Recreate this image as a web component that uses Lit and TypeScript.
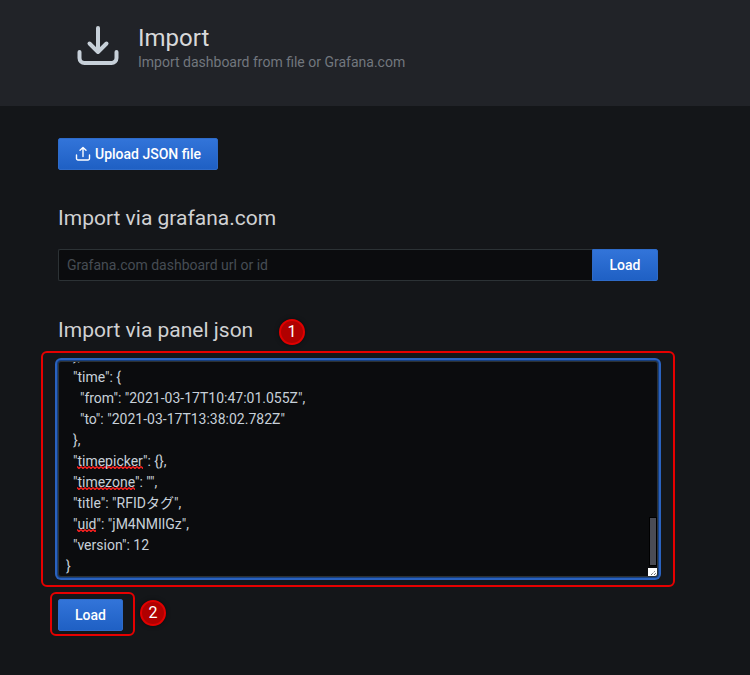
import { LitElement, html, css } from "lit";
import { customElement } from "lit/decorators.js";

@customElement("app-root")
export class AppRoot extends LitElement {
  static styles = css`
    :host { display: block; position: relative; width: 750px; height: 675px; overflow: hidden; background: #141619; font-family: Roboto, "Noto Sans CJK JP", sans-serif; color: #c7d0d9; font-size: 14px; }
    .header { height: 106px; box-sizing: border-box; background: #212328; display: flex; padding: 24px 0 0 76px; gap: 18px; }
    .header svg { width: 44px; height: 44px; flex: none; }
    .title { font-size: 24px; line-height: 28px; color: #d8d9da; font-weight: 400; }
    .sub { font-size: 14px; line-height: 16px; color: #72777e; margin-top: 2px; }
    .main { padding: 32px 0 0 58px; width: 600px; }
    .btn { height: 32px; box-sizing: border-box; border: 1px solid #2e6bc9; border-radius: 2px; background: linear-gradient(180deg, #3274d9, #1f60c4); color: #fff; font: 500 14px Roboto, sans-serif; display: flex; align-items: center; justify-content: center; padding: 0; }
    .upload { width: 160px; gap: 4px; padding-bottom: 1px; }
    .upload svg { width: 16px; height: 16px; }
    h2 { font-size: 21px; line-height: 24px; font-weight: 400; color: #d0d1d3; margin: 0; }
    .h1 { margin-top: 36px; }
    .row { display: flex; margin-top: 19px; }
    .input { flex: 1; height: 32px; box-sizing: border-box; background: #0b0c0e; border: 1px solid #2c3235; border-right: 0; border-radius: 2px 0 0 2px; color: #464c54; padding: 0 8px; line-height: 30px; }
    .load-go { width: 66px; border-radius: 0 2px 2px 0; }
    .h2 { margin-top: 37px; }
    .ta { margin-top: 19px; width: 600px; height: 216px; box-sizing: border-box; background: #0b0c0e; border: 1px solid #2c3235; box-shadow: 0 0 0 1px #173f7e, 0 0 0 3px #2a62bf; border-radius: 3px; overflow: hidden; position: relative; color: #c7d0d9; }
    .code { margin: -16px 0 0 7px; line-height: 21px; white-space: pre; }
    .sp { background: url("data:image/svg+xml,%3Csvg xmlns='http://www.w3.org/2000/svg' width='4' height='3'%3E%3Cpath d='M0 .5L2 2.500L4 .5' fill='none' stroke='%23ff2020' stroke-width='1.400'/%3E%3C/svg%3E") repeat-x 0 100%; }
    .bar { position: absolute; right: 0; bottom: 10px; width: 8px; height: 49px; box-sizing: border-box; background: #4a4c55; border: 1px solid #000; }
    .grip { position: absolute; right: 0; bottom: 0; width: 9px; height: 8px; background: #fff; }
    .grip svg { display: block; width: 9px; height: 8px; }
    .load2 { margin-top: 22px; width: 65px; }
    .mark { position: absolute; border: 2px solid #e60000; border-radius: 6px; box-sizing: border-box; }
    .m1 { left: 41px; top: 351px; width: 634px; height: 236px; }
    .m2 { left: 50px; top: 592px; width: 85px; height: 44px; }
    .badge { position: absolute; width: 26px; height: 26px; box-sizing: border-box; border-radius: 50%; background: #b00000; border: 2px solid #e00000; color: #fff; font-size: 16px; line-height: 22px; text-align: center; box-shadow: 0 0 4px rgba(0,0,0,.5); }
    .b1 { left: 279px; top: 319px; }
    .b2 { left: 140px; top: 600px; }
  `;

  render() {
    return html`
      <div class="header">
        <svg viewBox="0 0 44 44" fill="none" stroke="#c7d0d9" stroke-width="4" stroke-linecap="round" stroke-linejoin="round">
          <path d="M22 4v24M13.500 19.500L22 28l8.500-8.500"/>
          <path d="M3.500 28v6a5 5 0 0 0 5 5h27a5 5 0 0 0 5-5v-6"/>
        </svg>
        <div>
          <div class="title">Import</div>
          <div class="sub">Import dashboard from file or Grafana.com</div>
        </div>
      </div>
      <div class="main">
        <div class="btn upload">
          <svg viewBox="0 0 16 16" fill="none" stroke="#fff" stroke-width="1.400" stroke-linecap="round" stroke-linejoin="round">
            <path d="M8 10.500V1.500M5 4.300l3-2.800 3 2.800"/>
            <path d="M1.500 9v3.500a1.500 1.500 0 0 0 1.500 1.500h10a1.500 1.500 0 0 0 1.500-1.500V9"/>
          </svg>
          Upload JSON file
        </div>
        <h2 class="h1">Import via grafana.com</h2>
        <div class="row">
          <div class="input">Grafana.com dashboard url or id</div>
          <div class="btn load-go">Load</div>
        </div>
        <h2 class="h2">Import via panel json</h2>
        <div class="ta">
          <div class="code">  },
  "time": {
    "from": "2021-03-17T10:47:01.055Z",
    "to": "2021-03-17T13:38:02.782Z"
  },
  "<span class="sp">timepicker</span>": {},
  "<span class="sp">timezone</span>": "",
  "title": "RFIDタグ",
  "<span class="sp">uid</span>": "jM4NMIlGz",
  "version": 12
}</div>
          <div class="bar"></div>
          <div class="grip"><svg viewBox="0 0 9 8" stroke="#333" stroke-width="1" stroke-dasharray="1 1"><path d="M3 7l4-4M6 7l2-2"/></svg></div>
        </div>
        <div class="btn load2">Load</div>
      </div>
      <div class="mark m1"></div>
      <div class="mark m2"></div>
      <div class="badge b1">1</div>
      <div class="badge b2">2</div>
    `;
  }
}
